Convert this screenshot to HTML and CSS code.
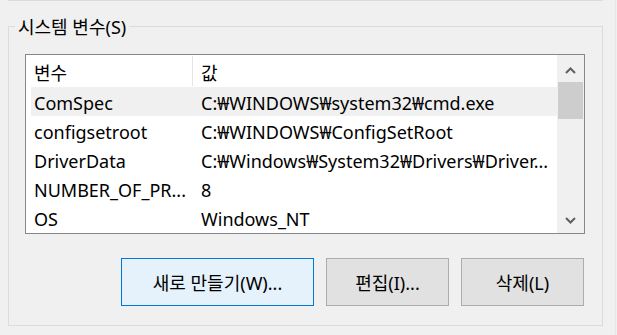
FILE: index.html
```html
<!DOCTYPE html>
<html lang="ko">
<head>
    <meta charset="UTF-8">
    <meta name="viewport" content="width=device-width, initial-scale=1.0">
    <title>환경 변수</title>
    <link rel="stylesheet" href="styles.css">
</head>
<body>
  <div class="dialog">
    <div class="prev-group"></div>

    <fieldset class="group">
      <legend class="group-title">시스템 변수(S)</legend>

      <div class="listview">
        <div class="list-content">
          <div class="list-head">
            <div class="head-name">변수</div>
            <div class="head-value">값</div>
          </div>
          <div class="row hover">
            <div class="cell-name">ComSpec</div>
            <div class="cell-value">C:₩WINDOWS₩system32₩cmd.exe</div>
          </div>
          <div class="row">
            <div class="cell-name">configsetroot</div>
            <div class="cell-value">C:₩WINDOWS₩ConfigSetRoot</div>
          </div>
          <div class="row">
            <div class="cell-name">DriverData</div>
            <div class="cell-value">C:₩Windows₩System32₩Drivers₩Driver...</div>
          </div>
          <div class="row">
            <div class="cell-name">NUMBER_OF_PR...</div>
            <div class="cell-value">8</div>
          </div>
          <div class="row">
            <div class="cell-name">OS</div>
            <div class="cell-value">Windows_NT</div>
          </div>
        </div>

        <div class="scrollbar">
          <div class="scroll-btn up">
            <svg width="11" height="7" viewBox="0 0 11 7"><polyline points="1,6 5.5,1.5 10,6" fill="none" stroke="#606060" stroke-width="2"/></svg>
          </div>
          <div class="scroll-thumb"></div>
          <div class="scroll-track"></div>
          <div class="scroll-btn down">
            <svg width="11" height="7" viewBox="0 0 11 7"><polyline points="1,1 5.5,5.5 10,1" fill="none" stroke="#606060" stroke-width="2"/></svg>
          </div>
        </div>
      </div>

      <div class="button-row">
        <button class="win-button default">새로 만들기(W)...</button>
        <button class="win-button">편집(I)...</button>
        <button class="win-button">삭제(L)</button>
      </div>
    </fieldset>
  </div>
</body>
</html>
```

FILE: styles.css
```css
html, body {
    margin: 0;
    padding: 0;
    background-color: #F0F0F0;
    font-family: "Noto Sans", "Noto Sans CJK KR", sans-serif;
    font-size: 18px;
    color: #000000;
}

.dialog {
    width: 615px;
    height: 335px;
    border-right: 1px solid #E6E6E6;
}

/* bottom edge of the group above */
.prev-group {
    height: 0;
    margin: 0 12px 0 8px;
    border-bottom: 1px solid #DCDCDC;
}

/* Group box */
.group {
    margin: 14px 12px 0 8px;
    padding: 0;
    border: 1px solid #DCDCDC;
}

.group-title {
    margin-left: 6px;
    padding: 2px 3px 0;
    line-height: 20px;
}

/* List view */
.listview {
    display: flex;
    height: 178px;
    margin: 17px 17px 0 16px;
    border: 1px solid #828790;
    background-color: #FFFFFF;
}

.list-content {
    flex: 1;
    overflow: hidden;
}

.list-head {
    display: flex;
    height: 32px;
}

.head-name {
    width: 158px;
    padding: 5px 0 0 8px;
    margin: 1px 0 1px;
    border-right: 1px solid #E5E5E5;
    line-height: 24px;
}

.head-value {
    padding: 6px 0 0 8px;
    line-height: 24px;
}

.row {
    display: flex;
    height: 29px;
    margin-left: 5px;
    white-space: nowrap;
}

.row.hover {
    background-color: #F0F0F0;
}

.cell-name {
    width: 159px;
    padding: 3px 0 0 3px;
    line-height: 26px;
    overflow: hidden;
}

.cell-value {
    flex: 1;
    padding: 3px 0 0 8px;
    line-height: 26px;
    overflow: hidden;
}

/* Scroll bar */
.scrollbar {
    display: flex;
    flex-direction: column;
    width: 27px;
    background-color: #F0F0F0;
}

.scroll-btn {
    display: flex;
    justify-content: center;
    align-items: center;
}

.scroll-btn.up {
    height: 27px;
    padding-top: 4px;
    box-sizing: border-box;
}

.scroll-btn.down {
    height: 26px;
}

.scroll-thumb {
    height: 37px;
    margin: 0 1px;
    background-color: #CDCDCD;
}

.scroll-track {
    flex: 1;
}

/* Buttons */
.button-row {
    display: flex;
    justify-content: flex-end;
    gap: 12px;
    margin: 24px 18px 0 0;
    padding-bottom: 19px;
}

.win-button {
    width: 123px;
    height: 48px;
    padding: 0;
    font-family: inherit;
    font-size: 18px;
    color: #000000;
    background-color: #E1E1E1;
    border: 1px solid #ADADAD;
}

.win-button.default {
    width: 193px;
    background-color: #E5F1FB;
    border-color: #0078D7;
}
```
